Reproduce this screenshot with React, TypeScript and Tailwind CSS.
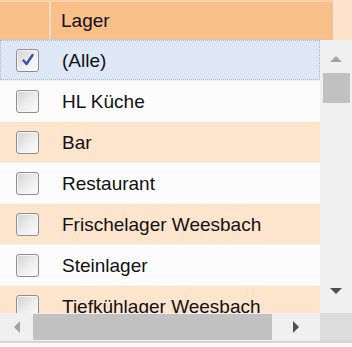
import React from "react";

interface IRow {
  label: string;
  checked: boolean;
}

const rows: IRow[] = [
  { label: "(Alle)", checked: true },
  { label: "HL Küche", checked: false },
  { label: "Bar", checked: false },
  { label: "Restaurant", checked: false },
  { label: "Frischelager Weesbach", checked: false },
  { label: "Steinlager", checked: false },
  { label: "Tiefkühlager Weesbach", checked: false },
];

function CheckBox({ checked }: { checked: boolean }) {
  return (
    <div className="w-[23px] h-[23px] rounded-[3px] border border-[#8e8e8e] bg-gradient-to-br from-[#d2d2d2] via-[#ececec] to-[#fdfdfd] flex items-center justify-center shadow-[inset_0_0_0_1px_#f6f6f6]">
      {checked && (
        <svg width="16" height="16" viewBox="0 0 16 16">
          <path
            d="M3.5 8.5 L6.5 12 L12.5 3"
            fill="none"
            stroke="#3b4ea6"
            strokeWidth="2.4"
            strokeLinecap="round"
            strokeLinejoin="round"
          />
        </svg>
      )}
    </div>
  );
}

function App() {
  return (
    <div className="w-[352px] h-[347px] overflow-hidden bg-white font-['Liberation_Sans',Arial,sans-serif] text-[19px] text-[#111]">
      {/* header */}
      <div className="flex h-[40px] bg-[#fde3cb]">
        <div className="w-[333px] flex bg-[#f8bf88] border-r border-b border-[#d9c4b0] border-t-2 border-t-[#fad0a6]">
          <div className="w-[51px] border-r-2 border-[#f3dcc6]" />
          <div className="flex items-center pl-[10px] leading-none">Lager</div>
        </div>
      </div>
      <div className="flex h-[273px]">
        <div className="w-[320px] overflow-hidden">
          {rows.map((row, i) => (
            <div
              key={row.label}
              className={
                i === 0
                  ? "h-[40px] flex items-center bg-[#dfe8f6] border border-dotted border-[#a7b8e3] whitespace-nowrap"
                  : i % 2 === 0
                  ? "h-[41px] flex items-center bg-[#fde4cd] border-t border-[#f7f7f7] whitespace-nowrap"
                  : "h-[41px] flex items-center bg-[#fcfcfc] border-t border-[#efefef] whitespace-nowrap"
              }
            >
              <div className={i === 0 ? "w-[61px] pl-[15px]" : "w-[62px] pl-[16px]"}>
                <CheckBox checked={row.checked} />
              </div>
              <span className="leading-none">{row.label}</span>
            </div>
          ))}
        </div>
        {/* vertical scrollbar */}
        <div className="w-[32px] bg-[#f0f0f0] flex flex-col items-center">
          <div className="h-[33px] flex items-center justify-center pt-[4px]">
            <div className="w-0 h-0 border-l-[6px] border-r-[6px] border-b-[6px] border-l-transparent border-r-transparent border-b-[#a3a3a3]" />
          </div>
          <div className="w-[27px] h-[30px] bg-[#c1c1c1]" />
          <div className="flex-1" />
          <div className="h-[33px] flex items-start justify-center pt-[8px]">
            <div className="w-0 h-0 border-l-[6px] border-r-[6px] border-t-[6px] border-l-transparent border-r-transparent border-t-[#505050]" />
          </div>
        </div>
      </div>
      {/* horizontal scrollbar */}
      <div className="flex h-[28px]">
        <div className="w-[320px] bg-[#f0f0f0] flex items-center">
          <div className="w-[33px] flex justify-center">
            <div className="w-0 h-0 border-t-[6px] border-b-[6px] border-r-[6px] border-t-transparent border-b-transparent border-r-[#a3a3a3]" />
          </div>
          <div className="w-[239px] h-[26px] bg-[#c1c1c1]" />
          <div className="flex-1 flex justify-center">
            <div className="w-0 h-0 border-t-[6px] border-b-[6px] border-l-[6px] border-t-transparent border-b-transparent border-l-[#505050]" />
          </div>
        </div>
        <div className="w-[32px] bg-[#dcdcdc]" />
      </div>
      <div className="h-[2px] bg-[#d4d4d4]" />
      <div className="h-[4px] bg-[#fafafa]" />
    </div>
  );
}

export default App;
